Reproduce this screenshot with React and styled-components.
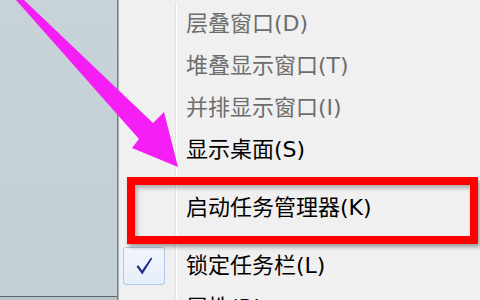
import React from "react";
import styled, { createGlobalStyle } from "styled-components";

const Global = createGlobalStyle`
  html, body { margin: 0; padding: 0; background: #f0f0f0; }
  #root { width: 480px; height: 300px; }
`;

const Screen = styled.div`
  position: relative;
  width: 480px;
  height: 300px;
  overflow: hidden;
  display: flex;
  font-family: "DejaVu Sans", "Noto Sans CJK SC", sans-serif;
`;

const Desktop = styled.div`
  width: 117px;
  flex: none;
  display: flex;
  flex-direction: column;
  border-right: 1px solid #76828a;
`;

const DesktopArea = styled.div`
  height: 296px;
  flex: none;
  background: linear-gradient(180deg, #c8d3d9 0%, #c3cfd5 100%);
  border-bottom: 1px solid #5d676d;
`;

const DesktopBelow = styled.div`
  flex: 1;
  background: #b9c3c8;
`;

const Menu = styled.div`
  flex: 1;
  background: #f0f0f0;
  border-left: 1px solid #a6aeb3;
  padding-top: 3px;
  display: flex;
  flex-direction: column;
`;

const Row = styled.div`
  display: flex;
  height: ${(p) => (p.$sep ? 16 : 42)}px;
  flex: none;
`;

const IconCell = styled.div`
  width: 56px;
  flex: none;
  display: flex;
  align-items: center;
  padding-left: 4px;
  box-sizing: border-box;
`;

const Label = styled.div`
  flex: 1;
  display: flex;
  align-items: center;
  border-left: 1px solid #e2e3e3;
  box-shadow: inset 1px 0 0 #ffffff;
  padding-left: 10px;
  font-size: 22px;
  line-height: 1;
  white-space: nowrap;
  color: ${(p) => (p.$disabled ? "#6d6d6d" : "#000000")};
`;

const SepLine = styled.div`
  flex: 1;
  border-left: 1px solid #e2e3e3;
  box-shadow: inset 1px 0 0 #ffffff;
  display: flex;
  align-items: center;
  padding-left: 6px;
  &::after {
    content: "";
    flex: 1;
    height: 1px;
    background: #e0e0e0;
    border-bottom: 1px solid #ffffff;
  }
`;

const CheckBox = styled.div`
  width: 42px;
  height: 38px;
  box-sizing: border-box;
  border: 1px solid #aecbee;
  border-radius: 3px;
  background: linear-gradient(180deg, #f2f6fc 0%, #e6eef9 100%);
  display: flex;
  align-items: center;
  justify-content: center;
`;

const Highlight = styled.div`
  position: absolute;
  left: 127px;
  top: 177px;
  width: 351px;
  height: 67px;
  box-sizing: border-box;
  border: 8px solid #ff0000;
  box-shadow: 2px 3px 4px rgba(0, 0, 0, 0.35),
    inset 2px 3px 4px rgba(0, 0, 0, 0.28);
  pointer-events: none;
`;

const ArrowSvg = styled.svg`
  position: absolute;
  left: 0;
  top: 0;
  pointer-events: none;
`;

const items = [
  { text: "层叠窗口(D)", disabled: true },
  { text: "堆叠显示窗口(T)", disabled: true },
  { text: "并排显示窗口(I)", disabled: true },
  { text: "显示桌面(S)" },
  { sep: true },
  { text: "启动任务管理器(K)" },
  { sep: true },
  { text: "锁定任务栏(L)", checked: true },
  { text: "属性(R)" },
];

export default function App() {
  return (
    <>
      <Global />
      <Screen>
        <Desktop>
          <DesktopArea />
          <DesktopBelow />
        </Desktop>
        <Menu>
          {items.map((it, i) =>
            it.sep ? (
              <Row key={i} $sep>
                <IconCell />
                <SepLine />
              </Row>
            ) : (
              <Row key={i}>
                <IconCell>
                  {it.checked && (
                    <CheckBox>
                      <svg width="20" height="20" viewBox="0 0 20 20">
                        <path
                          d="M2.5 10.5 L4.5 9.3 L8 14.5 L17 1.5 L18.3 2.5 L8.3 18.5 Z"
                          fill="#1d2b8f"
                        />
                      </svg>
                    </CheckBox>
                  )}
                </IconCell>
                <Label $disabled={it.disabled}>{it.text}</Label>
              </Row>
            )
          )}
        </Menu>
        <Highlight />
        <ArrowSvg width="480" height="300" viewBox="0 0 480 300">
          <polygon
            points="16,0 24,0 153,123 164,112 178,167 132,148 139,139"
            fill="#f51ef5"
          />
        </ArrowSvg>
      </Screen>
    </>
  );
}
